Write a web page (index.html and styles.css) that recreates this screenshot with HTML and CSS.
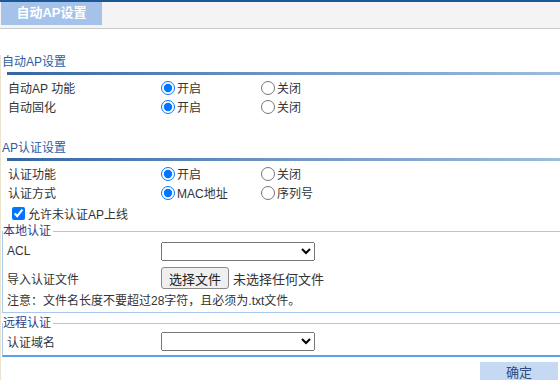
FILE: index.html
```html
<!DOCTYPE html>
<html lang="zh-CN">
<head>
  <meta charset="UTF-8">
  <title>自动AP设置</title>
  <link rel="stylesheet" href="styles.css">
</head>
<body>
<div class="topbar">
  <div class="tab">自动AP设置</div>
</div>
<div class="page">
  <div class="section first">
    <div class="sec-title">自动AP设置</div>
    <div class="sec-bar"></div>
    <div class="row">
      <span class="lbl">自动AP 功能</span>
      <label class="opt"><input type="radio" name="auto" checked>开启</label>
      <label class="opt"><input type="radio" name="auto">关闭</label>
    </div>
    <div class="row">
      <span class="lbl">自动固化</span>
      <label class="opt"><input type="radio" name="fix" checked>开启</label>
      <label class="opt"><input type="radio" name="fix">关闭</label>
    </div>
  </div>

  <div class="section">
    <div class="sec-title">AP认证设置</div>
    <div class="sec-bar"></div>
    <div class="row">
      <span class="lbl">认证功能</span>
      <label class="opt"><input type="radio" name="auth" checked>开启</label>
      <label class="opt"><input type="radio" name="auth">关闭</label>
    </div>
    <div class="row">
      <span class="lbl">认证方式</span>
      <label class="opt"><input type="radio" name="mode" checked>MAC地址</label>
      <label class="opt"><input type="radio" name="mode">序列号</label>
    </div>
    <label class="check"><input type="checkbox" checked>允许未认证AP上线</label>

    <fieldset class="box">
      <legend>本地认证</legend>
      <div class="frow acl">
        <span>ACL</span>
        <select><option></option></select>
      </div>
      <div class="frow file">
        <span>导入认证文件</span>
        <span class="picker"><button type="button" class="filebtn">选择文件</button><span class="nofile">未选择任何文件</span></span>
      </div>
      <div class="note">注意：文件名长度不要超过28字符，且必须为.txt文件。</div>
    </fieldset>

    <fieldset class="box remote">
      <legend>远程认证</legend>
      <div class="frow">
        <span>认证域名</span>
        <select><option></option></select>
      </div>
    </fieldset>
  </div>

  <div class="actions">
    <button type="button" class="ok">确定</button>
  </div>
</div>
</body>
</html>
```

FILE: styles.css
```css
body {
  margin: 0;
  font-family: "Liberation Sans", "Noto Sans CJK SC", sans-serif;
  font-size: 12px;
  color: #333;
  overflow: hidden;
}
.topbar {
  border-top: 2px solid #1d5896;
  background: #f4f4f4;
  border-bottom: 1px solid #c9c9c9;
  height: 26px;
}
.tab {
  margin-left: 1px;
  width: 101px;
  height: 23px;
  line-height: 22px;
  background: #a5c2ea;
  color: #fff;
  font-size: 13px;
  font-weight: bold;
  text-align: center;
}
.page {
  border-left: 1px solid #ebe5d0;
}
.section {
  margin-top: 25px;
}
.section.first {
  margin-top: 26px;
}
.sec-title {
  line-height: 14px;
  padding-left: 1px;
  color: #2c5c9e;
}
.sec-bar {
  margin: 3px 0 0 6px;
  height: 3px;
  background: linear-gradient(to right, #3466a4, #6f97c6 50%, #9dbbdd);
}
.row {
  display: grid;
  grid-template-columns: 148px 100px 100px;
  align-items: center;
  height: 19px;
  padding-left: 7px;
}
.sec-bar + .row {
  margin-top: 3px;
}
.opt {
  display: flex;
  align-items: center;
}
.opt input {
  width: 14px;
  height: 14px;
  margin: 0 2px 0 5px;
}
.check {
  display: flex;
  align-items: center;
  height: 20px;
  margin-top: 1px;
  padding-left: 7px;
}
.check input {
  margin: 0 3px 0 4px;
}
.box {
  margin: 1px 0 0 1px;
  padding: 0 0 3px 0;
  border: 1px solid #a8c8ec;
  border-right: none;
}
.box legend {
  padding: 0 2px 0 0;
  line-height: 14px;
  color: #1d3f8c;
}
.frow {
  display: grid;
  grid-template-columns: 154px auto;
  align-items: center;
  height: 20px;
  padding-left: 4px;
}
.frow.acl {
  margin-top: 3px;
}
.frow.file {
  height: 30px;
  margin-top: 2px;
}
.frow select {
  width: 154px;
  height: 19px;
  font-size: 12px;
}
.picker {
  display: flex;
  align-items: center;
  font-size: 13px;
}
.filebtn {
  height: 22px;
  padding: 0 7px;
  font: inherit;
  color: #222;
  background: #efefef;
  border: 1px solid #8a8a8a;
  border-radius: 3px;
}
.nofile {
  margin-left: 4px;
}
.note {
  height: 16px;
  line-height: 16px;
  padding-left: 4px;
}
.box.remote {
  margin-top: 3px;
  padding-bottom: 4px;
  border-bottom: 2px solid #5ba2e6;
}
.box.remote .frow {
  margin-top: 1px;
}
.actions {
  display: flex;
  justify-content: flex-end;
  margin-top: 5px;
  padding-right: 2px;
}
.ok {
  width: 78px;
  height: 18px;
  line-height: 18px;
  padding: 0;
  border: none;
  background: #c6d9f2;
  color: #2a4a80;
  font: inherit;
  font-size: 13px;
}
```
